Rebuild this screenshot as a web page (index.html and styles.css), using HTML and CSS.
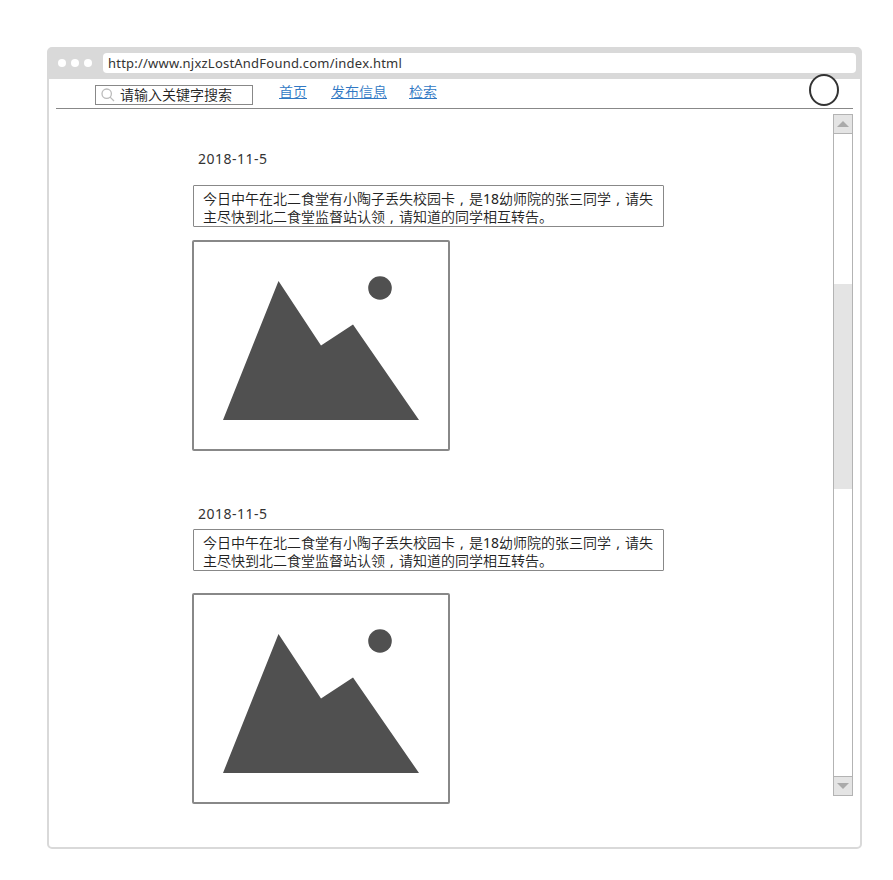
FILE: index.html
```html
<!DOCTYPE html>
<html lang="zh-CN">
<head>
<meta charset="utf-8">
<title>njxzLostAndFound</title>
<link rel="stylesheet" href="styles.css">
</head>
<body>
<div class="browser">
  <header class="chrome">
    <i class="dot"></i><i class="dot"></i><i class="dot"></i>
    <div class="address">http://www.njxzLostAndFound.com/index.html</div>
  </header>
  <nav class="toolbar">
    <div class="search">
      <svg class="search-icon" width="14" height="14" viewBox="0 0 14 14"><circle cx="5.7" cy="5.7" r="4.7"/><path d="M9.1 9.1L13 13"/></svg>
      <span>请输入关键字搜索</span>
    </div>
    <a class="link" href="#">首页</a>
    <a class="link" href="#">发布信息</a>
    <a class="link link-last" href="#">检索</a>
    <svg class="avatar" width="30" height="32" viewBox="0 0 30 32"><ellipse cx="15" cy="16" rx="14" ry="15"/></svg>
  </nav>
  <div class="content">
    <main class="feed">
      <article class="post">
        <time class="date">2018-11-5</time>
        <p class="message">今日中午在北二食堂有小陶子丢失校园卡<span class="comma">,</span>是<span class="number">18</span>幼师院的张三同学<span class="comma">,</span>请失<br>主尽快到北二食堂监督站认领<span class="comma">,</span>请知道的同学相互转告。</p>
        <div class="picture">
          <svg width="254" height="207" viewBox="0 0 254 207"><path d="M29 178L84.500 39L127 103.500L159 82.500L225 178Z"/><circle cx="186" cy="46" r="11.800"/></svg>
        </div>
      </article>
      <article class="post post-compact">
        <time class="date">2018-11-5</time>
        <p class="message">今日中午在北二食堂有小陶子丢失校园卡<span class="comma">,</span>是<span class="number">18</span>幼师院的张三同学<span class="comma">,</span>请失<br>主尽快到北二食堂监督站认领<span class="comma">,</span>请知道的同学相互转告。</p>
        <div class="picture">
          <svg width="254" height="207" viewBox="0 0 254 207"><path d="M29 178L84.500 39L127 103.500L159 82.500L225 178Z"/><circle cx="186" cy="46" r="11.800"/></svg>
        </div>
      </article>
    </main>
    <aside class="scrollbar">
      <div class="arrow up"><svg width="12" height="6" viewBox="0 0 12 6"><path d="M0 6L6 0L12 6Z"/></svg></div>
      <div class="track"><div class="thumb"></div></div>
      <div class="arrow down"><svg width="12" height="6" viewBox="0 0 12 6"><path d="M0 0L6 6L12 0Z"/></svg></div>
    </aside>
  </div>
</div>
</body>
</html>
```

FILE: styles.css
```css
* { box-sizing: border-box; }
body {
  margin: 0;
  padding: 47px;
  background: #fff;
  color: #333;
  font: 14px/18px "Noto Sans", "Noto Sans CJK SC", sans-serif;
}
svg { display: block; }
.browser {
  width: 815px;
  height: 802px;
  border: 2px solid #d9d9d9;
  border-radius: 5px;
  background: #fff;
}
.chrome {
  display: flex;
  align-items: center;
  gap: 5px;
  height: 30px;
  padding: 0 4px 2px 9px;
  background: #d9d9d9;
}
.dot {
  width: 8px;
  height: 8px;
  border-radius: 50%;
  background: #fff;
}
.address {
  flex: 1;
  height: 20px;
  margin-left: 6px;
  padding-left: 5px;
  border-radius: 4px;
  background: #fff;
  font-size: 13px;
  letter-spacing: 0.22px;
  line-height: 20px;
  white-space: nowrap;
}
.toolbar {
  position: relative;
  display: flex;
  align-items: flex-start;
  height: 30px;
  margin: 0 7px;
  padding: 6px 0 0 39px;
  border-bottom: 1px solid #888;
  color: #222;
  font-weight: 350;
}
.search {
  display: flex;
  align-items: center;
  gap: 5px;
  width: 158px;
  height: 20px;
  padding-left: 5px;
  margin-right: 2px;
  border: 1px solid #888;
}
.search-icon { fill: none; stroke: #bbb; stroke-width: 1.3; }
.link {
  margin: -2px 0 0 24px;
  color: #3078c4;
  text-underline-offset: 1px;
}
.link-last { margin-left: 22px; }
.avatar {
  position: absolute;
  top: -5px;
  right: 14px;
  fill: #fff;
  stroke: #333;
  stroke-width: 2;
}
.content {
  display: flex;
  justify-content: space-between;
  padding: 5px 7px 0 143px;
}
.feed { width: 472px; padding-top: 36px; }
.date { display: block; padding-left: 6px; letter-spacing: 0.5px; }
.message {
  width: 471px;
  height: 42px;
  margin: 17px 0 13px 1px;
  padding: 4px 0 0 9px;
  border: 1px solid #888;
  border-radius: 1px;
  color: #222;
  font-weight: 350;
  white-space: nowrap;
}
.number { font-weight: 400; }
.comma {
  display: inline-block;
  width: 14px;
  font-weight: 400;
  text-align: center;
}
.picture {
  width: 258px;
  height: 211px;
  border: 2px solid #888;
  border-radius: 2px;
  fill: #505050;
}
.post-compact { margin-top: 54px; }
.post-compact .message { margin-top: 6px; margin-bottom: 22px; }
.scrollbar {
  display: flex;
  flex-direction: column;
  width: 20px;
  height: 682px;
  border: 1px solid #b3b3b3;
}
.arrow {
  display: flex;
  align-items: center;
  justify-content: center;
  height: 19px;
  background: #e4e4e4;
  fill: #aaa;
}
.up { border-bottom: 1px solid #b3b3b3; }
.down { border-top: 1px solid #b3b3b3; }
.track { flex: 1; padding-top: 150px; }
.thumb { height: 205px; background: #e4e4e4; }
```
